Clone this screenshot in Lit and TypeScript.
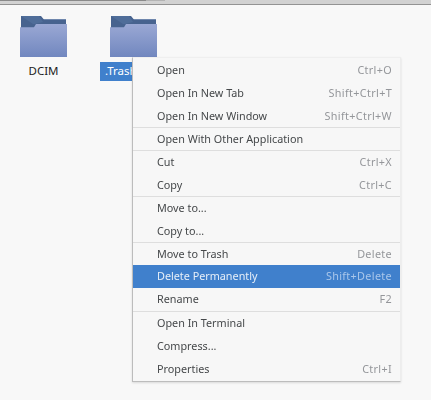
import { LitElement, html, css, svg } from "lit";
import { customElement } from "lit/decorators.js";

type Row = { l: string; s?: string; sep?: boolean; active?: boolean; up?: boolean; up2?: boolean };

const rows: Row[] = [
  { l: "Open", s: "Ctrl+O" },
  { l: "Open In New Tab", s: "Shift+Ctrl+T" },
  { l: "Open In New Window", s: "Shift+Ctrl+W" },
  { l: "Open With Other Application", sep: true, up: true },
  { l: "Cut", s: "Ctrl+X", sep: true, up: true },
  { l: "Copy", s: "Ctrl+C" },
  { l: "Move to...", sep: true, up: true },
  { l: "Copy to..." },
  { l: "Move to Trash", s: "Delete", sep: true, up: true },
  { l: "Delete Permanently", s: "Shift+Delete", active: true, up2: true },
  { l: "Rename", s: "F2", up2: true },
  { l: "Open In Terminal", sep: true, up: true },
  { l: "Compress..." },
  { l: "Properties", s: "Ctrl+I", up: true },
];

const folder = (id: string) => svg`<svg class="icon" width="47" height="41" viewBox="0 0 47 41">
  <defs><linearGradient id=${id} x1="0" y1="0" x2="0" y2="1"><stop offset="0" stop-color="#9aa8d4"/><stop offset="1" stop-color="#7187bf"/></linearGradient></defs>
  <path d="M1 0H21L23.5 3H46V12H1Z" fill="#47638f"/>
  <path d="M1 0H19L23 6L15 8H13Z" fill="#4f6d99"/>
  <path d="M23.5 3H46V4H24Z" fill="#6f87ad"/>
  <path d="M0 11.3H14L16 8H47V41H0Z" fill="url(#${id})"/>
</svg>`;

@customElement("app-root")
export class AppRoot extends LitElement {
  static styles = css`
    :host { display: block; width: 431px; height: 400px; overflow: hidden; background: #f8f8f8; position: relative; font-family: "Noto Sans", sans-serif; font-size: 10.8px; color: #2e3436; }
    .top { height: 4px; background: #d2d2d2; border-bottom: 1px solid #939393; }
    .thumb { width: 165px; height: 1px; background: #b4b4b4; }
    .fill { width: 146px; height: 1px; background: #8a8a8a; }
    .files { display: flex; padding: 11px 0 0 20px; gap: 43px; }
    .file { width: 47px; display: flex; flex-direction: column; align-items: center; }
    .icon { display: block; flex: none; }
    .name { margin-top: 5px; font-size: 11.5px; line-height: 18px; padding-bottom: 1px; white-space: nowrap; color: #1d1d1d; }
    .name.sel { background: #4080cc; color: #fff; box-sizing: border-box; flex: none; width: 67px; padding-left: 5px; }
    .menu { position: absolute; left: 132px; top: 57px; width: 267px; padding: 0 0 1px; background: #f7f7f7; border: 1px solid #c9c9c9; border-top-color: #efefef; border-right-color: #ededed; border-bottom-color: #bdbdbd; border-left-color: #bcbcbc; box-shadow: 0 1px 2px rgba(0,0,0,.12); }
    .row { height: 23px; display: flex; align-items: center; justify-content: space-between; padding: 0 8px 0 24px; color: #45484a; white-space: nowrap; box-sizing: border-box; }
    .row .sc { color: #94969a; letter-spacing: .34px; }
    .row.sep { border-top: 1px solid #dedede; }
    .row.up { padding-bottom: 1px; }
    .row.up2 { padding-bottom: 2px; }
    .row.active { background: #4080cc; color: #e6eef8; }
    .row.active .sc { color: #a9c6ea; }
    .row span { filter: blur(.3px); }
  `;

  render() {
    return html`
      <div class="top"><div class="thumb"><div class="fill"></div></div></div>
      <div class="files">
        <div class="file">${folder("a")}<div class="name">DCIM</div></div>
        <div class="file">${folder("b")}<div class="name sel">.Trash</div></div>
      </div>
      <div class="menu">
        ${rows.map(
          (r) => html`<div class="row ${r.sep ? "sep" : ""} ${r.up ? "up" : ""} ${r.up2 ? "up2" : ""} ${r.active ? "active" : ""}"><span>${r.l}</span>${r.s ? html`<span class="sc">${r.s}</span>` : ""}</div>`
        )}
      </div>
    `;
  }
}
